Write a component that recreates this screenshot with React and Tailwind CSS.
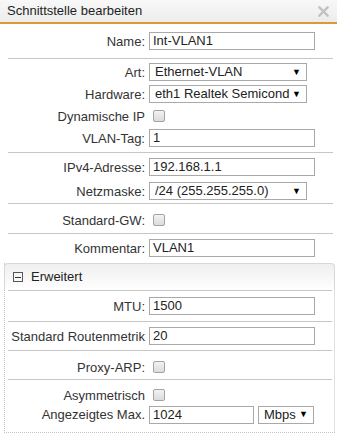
const font = { fontFamily: '"Liberation Sans", Arial, sans-serif' };

const Label = ({ children, w = 'w-[145px]' }) => (
    <div className={`${w} shrink-0 text-right text-[13px] text-[#333] leading-none`}>{children}</div>
);

const TextBox = ({ value, w = 'w-[166px]' }) => (
    <div className={`${w} h-[18px] ml-[4px] border border-[#a9a9a9] bg-white pl-[3px] flex items-center text-[13px] text-[#222]`}>
        {value}
    </div>
);

const SelectBox = ({ value, w = 'w-[158px]' }) => (
    <div className={`${w} h-[18px] ml-[4px] border border-[#a9a9a9] bg-white pl-[5px] pr-[5px] flex items-center text-[13px] text-[#222] overflow-hidden`}>
        <span className="flex-1 min-w-0 whitespace-nowrap overflow-hidden">{value}</span>
        <span className="shrink-0 text-[9px] text-black ml-[3px] leading-none">▼</span>
    </div>
);

const Check = () => (
    <div className="ml-[8px] w-[12px] h-[12px] rounded-[2px] border border-[#a3a3a3] bg-gradient-to-b from-[#f2f2f2] to-[#dcdcdc]" />
);

const Row = ({ label, children, lw }) => (
    <div className="flex items-center h-[18px]">
        <Label w={lw}>{label}</Label>
        {children}
    </div>
);

const Sep = ({ inner }) => (
    <div className={`h-px bg-[#c6c6c6] ${inner ? 'ml-[3px] mr-[3px]' : 'ml-[8px] mr-[4px]'}`} />
);

export default function App() {
    const lw = 'w-[140px]';
    return (
        <div className="w-[337px] h-[437px] bg-white overflow-hidden" style={font}>
            {/* Titlebar */}
            <div className="h-[24px] border-b-2 border-[#dc9a34] bg-gradient-to-b from-[#f8f8f8] to-[#ececec] flex items-center justify-between pl-[7px] pr-[8px]">
                <span className="text-[13px] text-[#1e1e1e]">Schnittstelle bearbeiten</span>
                <svg width="11" height="11" viewBox="0 0 12 12">
                    <path d="M1.5 1.5 L10.5 10.5 M10.5 1.5 L1.5 10.5" stroke="#c2c2c2" strokeWidth="2.6" strokeLinecap="round" />
                </svg>
            </div>

            <div className="pt-[8px] pb-[8px]">
                <Row label="Name:"><TextBox value="Int-VLAN1" /></Row>
            </div>
            <Sep />

            <div className="pt-[4px] pb-[5px] flex flex-col gap-[4px]">
                <Row label="Art:"><SelectBox value="Ethernet-VLAN" /></Row>
                <Row label="Hardware:"><SelectBox value="eth1 Realtek Semiconductor" /></Row>
                <Row label="Dynamische IP"><Check /></Row>
                <Row label="VLAN-Tag:"><TextBox value="1" /></Row>
            </div>
            <Sep />

            <div className="pt-[5px] pb-[3px] flex flex-col gap-[6px]">
                <Row label="IPv4-Adresse:"><TextBox value="192.168.1.1" /></Row>
                <Row label="Netzmaske:"><SelectBox value="/24 (255.255.255.0)" /></Row>
            </div>
            <Sep />

            <div className="pt-[7px] pb-[4px]">
                <Row label="Standard-GW:"><Check /></Row>
            </div>
            <Sep />

            <div className="pt-[5px]">
                <Row label="Kommentar:"><TextBox value="VLAN1" /></Row>
            </div>

            {/* Erweitert */}
            <div className="mt-[6px] ml-[4px] mr-[2px] h-[170px] border-l border-b border-dotted border-[#c4c4c4] relative">
                <div className="-ml-px h-[27px] border border-b-0 border-[#d8d8d8] rounded-t-[4px] bg-gradient-to-b from-[#efefef] to-white flex items-center pl-[8px]">
                    <div className="w-[10px] h-[10px] border border-[#555] flex items-center justify-center">
                        <div className="w-[6px] h-px bg-[#333]" />
                    </div>
                    <span className="ml-[8px] text-[13px] text-[#222]">Erweitert</span>
                </div>
                <div className="absolute right-0 top-[27px] bottom-0 w-px bg-[#e2e2e2]" />
                <Sep inner />

                <div className="pt-[6px] pb-[6px]">
                    <Row label="MTU:" lw={lw}><TextBox value="1500" /></Row>
                </div>
                <Sep inner />

                <div className="pt-[5px] pb-[5px]">
                    <Row label="Standard Routenmetrik" lw={lw}><TextBox value="20" /></Row>
                </div>
                <Sep inner />

                <div className="pt-[7px] pb-[3px]">
                    <Row label="Proxy-ARP:" lw={lw}><Check /></Row>
                </div>
                <Sep inner />

                <div className="pt-[6px] flex flex-col gap-[1px]">
                    <Row label="Asymmetrisch" lw={lw}><Check /></Row>
                    <div className="flex items-center h-[19px]">
                        <Label w={lw}>Angezeigtes Max.</Label>
                        <TextBox value="1024" w="w-[105px]" />
                        <SelectBox value="Mbps" w="w-[56px]" />
                    </div>
                </div>
            </div>
        </div>
    );
}
